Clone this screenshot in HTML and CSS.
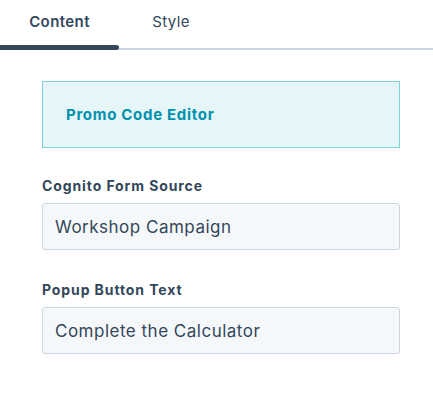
FILE: index.html
```html
<!DOCTYPE html>
<html>
<head>
<meta charset="utf-8">
<link rel="stylesheet" href="styles.css">
</head>
<body>
<div class="tabs">
  <div class="tab active">Content</div>
  <div class="tab">Style</div>
  <div class="tab-rest"></div>
</div>
<div class="panel">
  <div class="promo">Promo Code Editor</div>
  <div class="field">
    <div class="label">Cognito Form Source</div>
    <div class="input">Workshop Campaign</div>
  </div>
  <div class="field">
    <div class="label">Popup Button Text</div>
    <div class="input">Complete the Calculator</div>
  </div>
</div>
</body>
</html>
```
FILE: styles.css
```css
html, body {
  margin: 0;
  padding: 0;
  background: #ffffff;
  font-family: Inter, "Liberation Sans", sans-serif;
  color: #33475b;
}
.tabs {
  display: flex;
  height: 50px;
}
.tab {
  box-sizing: border-box;
  height: 50px;
  padding-top: 12px;
  font-size: 15px;
  letter-spacing: 0.4px;
  text-align: center;
  border-bottom: 2px solid #cbd6e2;
}
.tab.active {
  width: 119px;
  font-weight: 600;
  border-bottom: none;
  position: relative;
}
.tab.active::after {
  content: "";
  position: absolute;
  left: 0;
  right: 0;
  bottom: 0;
  height: 5px;
  background: #33475b;
  border-radius: 0 3px 3px 0;
}
.tab:not(.active) {
  width: 104px;
}
.tab-rest {
  flex: 1;
  box-sizing: border-box;
  height: 50px;
  border-bottom: 2px solid #cbd6e2;
}
.panel {
  padding: 31px 33px 0 42px;
  display: flex;
  flex-direction: column;
}
.promo {
  box-sizing: border-box;
  height: 67px;
  background: #e5f5f8;
  border: 1px solid #7fd1de;
  padding: 0 0 0 23px;
  display: flex;
  align-items: center;
  font-size: 15px;
  letter-spacing: 0.7px;
  font-weight: 700;
  color: #0091ae;
}
.field {
  margin-top: 29px;
}
.field + .field {
  margin-top: 31px;
}
.label {
  font-size: 14px;
  font-weight: 700;
  letter-spacing: 0.9px;
  line-height: 18px;
}
.input {
  box-sizing: border-box;
  margin-top: 8px;
  height: 47px;
  background: #f5f8fa;
  border: 1px solid #cbd6e2;
  border-radius: 3px;
  padding: 0 12px;
  display: flex;
  align-items: center;
  font-size: 17px;
  letter-spacing: 0.5px;
}
```
